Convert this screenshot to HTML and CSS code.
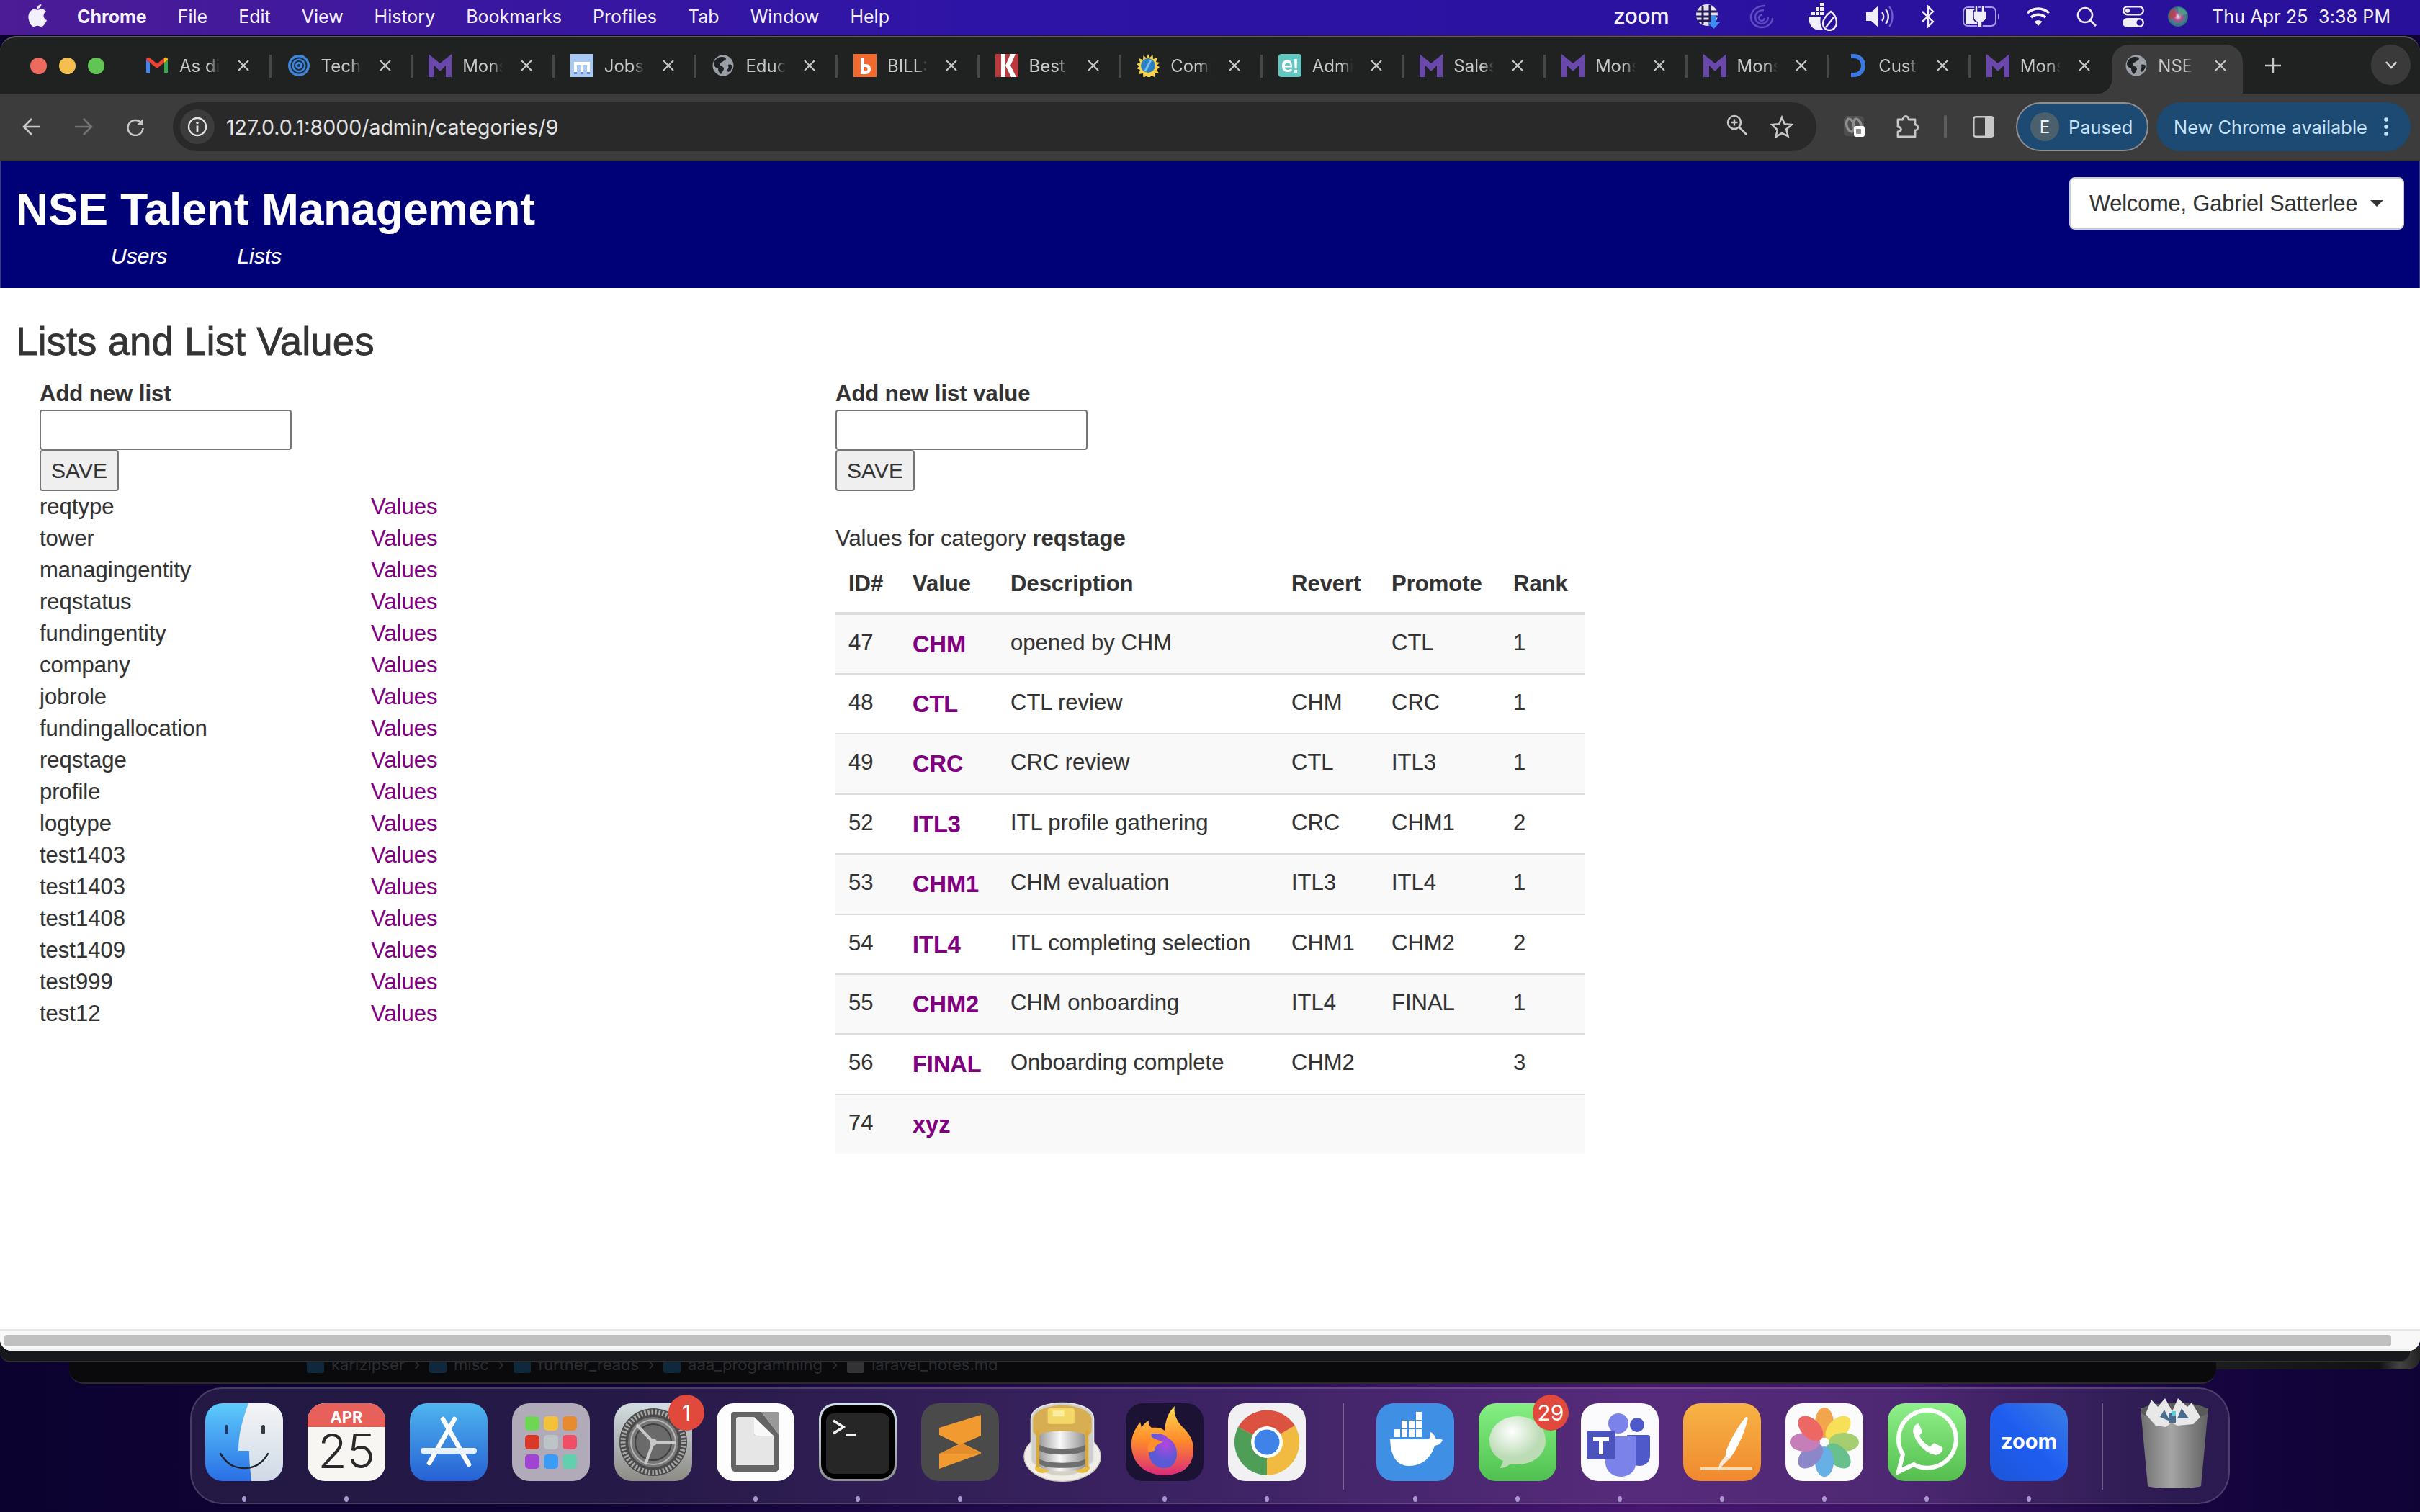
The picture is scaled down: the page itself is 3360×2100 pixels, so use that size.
FILE: index.html
```html
<!DOCTYPE html>
<html lang="en">
<head>
<meta charset="utf-8">
<title>NSE Talent Management</title>
<link rel="stylesheet" href="styles.css">
</head>
<body>
<svg class="sprite" aria-hidden="true">
  <symbol id="f-gmail" viewBox="0 0 32 32"><path d="M1 26V8l5 4v14z" fill="#4285f4"/><path d="M26 26V12l5-4v18z" fill="#34a853"/><path d="M1 8c0-3 3-4 5-2.500l10 8 10-8c2-1.500 5-.5 5 2.500l-5 4-10 8-10-8z" fill="#ea4335"/><path d="M26 5.500c2-1.500 5-.5 5 2.500l-5 4z" fill="#fbbc04"/></symbol>
  <symbol id="f-tech" viewBox="0 0 32 32"><circle cx="16" cy="16" r="15" fill="#3f86d8"/><circle cx="16" cy="16" r="10.500" fill="none" stroke="#1c2b42" stroke-width="2"/><circle cx="16" cy="16" r="6" fill="none" stroke="#1c2b42" stroke-width="2"/><circle cx="16" cy="16" r="2" fill="#1c2b42"/></symbol>
  <symbol id="f-mon" viewBox="0 0 32 32"><path d="M0 0l16 13L32 0v32h-8V16l-8 8-8-8v16H0z" fill="#6a48ab"/></symbol>
  <symbol id="f-jobs" viewBox="0 0 32 32"><rect width="32" height="32" fill="#a9c9f2"/><path d="M5 11h22v14h-4V15h-5v10h-4V15H9v10H5z" fill="#fff"/><path d="M5 25h4v3H5zm9 0h4v3h-4zm9 0h4v3h-4z" fill="#5b8ed6"/></symbol>
  <symbol id="f-globe" viewBox="0 0 32 32"><circle cx="16" cy="16" r="14.500" fill="#9aa0a6"/><path d="M9 5c5-2 10-1 11 1 0 3-3 3-5 5-3 1-5 3-3 6 3 0 5 1 5 4-1 3-3 5-4 7-3-2-4-5-4-8-3-1-6-3-6-7 1-4 3-6 6-8zM23 15c3-1 6 0 6 2-1 4-3 7-6 8-2-2-1-4 0-5 1-2 0-3 0-5z" fill="#202124"/></symbol>
  <symbol id="f-bills" viewBox="0 0 32 32"><rect width="32" height="32" fill="#f26a2e"/><path d="M10 5h5v9h2c5 0 7 3 7 7s-3 7-7 7h-7zm5 13v6h2c2 0 2.500-2 2.500-3s-.5-3-2.500-3z" fill="#fff"/></symbol>
  <symbol id="f-best" viewBox="0 0 32 32"><rect width="32" height="32" fill="#b83a3e"/><path d="M8 0h6v32H8zM28 0h-7l-7 16 8 16h7l-8-16z" fill="#fff"/></symbol>
  <symbol id="f-comp" viewBox="0 0 32 32"><path d="M16 0l2.500 5 4-4 .5 6 6-2-2 6 5 1-4 4 4 2-4 4 3 5-6 0 0 5-5-2-3 6-2.500-6-5 3-.5-6-6 1 2-6-5-2 4-3-4-3 5-2-2-6 6 2 .5-6 4.500 4z" fill="#f6d34a"/><circle cx="16" cy="16" r="10" fill="#2d7fc4"/><path d="M20 8l-8 16" stroke="#7cc2ee" stroke-width="3"/></symbol>
  <symbol id="f-adm" viewBox="0 0 32 32"><rect width="32" height="32" rx="4" fill="#63c6c0"/><path d="M13 8c-5 0-8 3.500-8 8.500s3 8.500 8 8.500c3 0 5-1 6-2l-1-3c-1 1-3 2-5 2-2.500 0-4-1.500-4.300-3.500H19c.5-5-2-10.500-6-10.500zm-4.200 8c.3-2 2-4 4.200-4s3.300 2 3.300 4z" fill="#fff"/><path d="M22 7h4l-.5 13h-3zM22 22h4v4h-4z" fill="#fff"/></symbol>
  <symbol id="f-cust" viewBox="0 0 32 32"><path d="M9 3h4c8 0 13 6 13 13s-5 13-13 13H9" fill="none" stroke="#3b78e0" stroke-width="6"/></symbol>
  <symbol id="close" viewBox="0 0 18 18"><path d="M2 2l14 14M16 2L2 16" stroke="#c7c7c7" stroke-width="2.200" fill="none"/></symbol>
</svg>

<div class="desktop">
  <header class="menubar">
    <svg class="apple" viewBox="0 0 26 32"><path d="M18.500 0c.2 3-2.500 6.500-6 6.300C12.200 3.300 15.200.3 18.500 0zM13 8c1.800 0 3.500-1.300 6-1.300 2.500 0 5 1.300 6.400 3.500-5.300 3-4.400 10.500 1 12.500-1.500 4-4.800 9.300-7.900 9.300-2.200 0-3-1.300-5.500-1.300s-3.400 1.300-5.500 1.300C4.200 32 0 24.500 0 18.300 0 12 4 7.200 8.500 7c1.700 0 3.300 1 4.500 1z" fill="#f4f0fb"/></svg>
    <nav class="menus">
      <span class="menu-app">Chrome</span><span>File</span><span>Edit</span><span>View</span><span>History</span><span>Bookmarks</span><span>Profiles</span><span>Tab</span><span>Window</span><span>Help</span>
    </nav>
    <div class="tray">
      <span class="tray-zoom">zoom</span>
      <svg class="t1" viewBox="0 0 34 36"><circle cx="16" cy="16" r="15" fill="#e4e2ee"/><path d="M2 11h28M1 18h30M3 24h24M10 3v26M20 2v28" stroke="#241a55" stroke-width="3"/><path d="M22 17h7v9h5l-8.500 9L17 26h5z" fill="#3d8ef0"/></svg>
      <svg class="t2" viewBox="0 0 34 34" fill="none" stroke="#5d4bc0" stroke-width="2.500"><path d="M22 2C10 2 2 9 2 18c0 8 7 14 15 14s15-6 15-13"/><path d="M20 8C13 8 8 12 8 18c0 5 4 9 9 9s9-4 9-9"/><path d="M18 15a4 4 0 1 0 3 4"/></svg>
      <svg class="t3" viewBox="0 0 40 40"><path d="M16 1h5v5h-5zM10 7h5v5h-5zM16 7h5v5h-5zM4 13h5v5H4zM10 13h5v5h-5zM16 13h5v5h-5z" fill="#f1eefb"/><path d="M0 20h17c-1 7-1 12 3 18H12C5 38 0 30 0 20z" fill="#f1eefb"/><path d="M31 13c-6 5-11 10-11 17 0 5 4 9 9 9s10-4 10-11c0-6-3-11-8-15zm4 8L24 35" fill="none" stroke="#f1eefb" stroke-width="2.400"/></svg>
      <svg class="t4" viewBox="0 0 38 32"><path d="M0 10h7L17 1v30L7 22H0z" fill="#f1eefb"/><path d="M22 10c3 3 3 9 0 12M27 6c5 5 5 15 0 20" fill="none" stroke="#f1eefb" stroke-width="2.400"/><path d="M32 2c6 7 6 21 0 28" fill="none" stroke="#6e5fc8" stroke-width="2.400"/></svg>
      <svg class="t5" viewBox="0 0 18 32"><path d="M1 9l15 14-7 7V2l7 7L1 23" fill="none" stroke="#f1eefb" stroke-width="2.400"/></svg>
      <svg class="t6" viewBox="0 0 52 30"><rect x="1" y="2" width="45" height="26" rx="6" fill="none" stroke="#a79fe0" stroke-width="2"/><path d="M4 5h18v20H4z" fill="#f1eefb"/><path d="M49 11c2 1 2 7 0 8z" fill="#a79fe0"/><path d="M17 0h4v7h5V0h4v7h3v9c0 4-3 6-6 7v7h-6v-7c-3-1-6-3-6-7V7h2z" fill="#f1eefb" stroke="#241196" stroke-width="1.500"/></svg>
      <svg class="t7" viewBox="0 0 34 26"><path d="M2 8c9-8 21-8 30 0M7 14c6-5 14-5 20 0" fill="none" stroke="#f6f4fd" stroke-width="3.600"/><path d="M17 26l-5.500-6c3-2.500 8-2.500 11 0z" fill="#f6f4fd"/></svg>
      <svg class="t8" viewBox="0 0 28 28"><circle cx="12" cy="12" r="10" fill="none" stroke="#f1eefb" stroke-width="2.600"/><path d="M19 19l8 8" stroke="#f1eefb" stroke-width="3"/></svg>
      <svg class="t9" viewBox="0 0 30 30"><rect x="1.200" y="1.200" width="27.600" height="11" rx="5.500" fill="none" stroke="#f1eefb" stroke-width="2.400"/><circle cx="7" cy="6.700" r="3" fill="#f1eefb"/><rect y="17" width="30" height="13" rx="6.500" fill="#f1eefb"/><circle cx="23.500" cy="23.500" r="4" fill="#241196"/></svg>
      <svg class="t10" viewBox="0 0 30 30"><defs><radialGradient id="siri" cx=".5" cy=".5" r=".55"><stop offset="0" stop-color="#f4e4f4"/><stop offset=".35" stop-color="#b84a8c"/><stop offset=".7" stop-color="#3c7f8a"/><stop offset="1" stop-color="#2a5d78"/></radialGradient></defs><circle cx="15" cy="15" r="14" fill="url(#siri)"/><path d="M3 19a14 14 0 0 1 6-16l4 12z" fill="#c8383f" opacity=".7"/><path d="M15 2a14 14 0 0 1 13 9l-12 4z" fill="#4fae8c" opacity=".65"/></svg>
      <span class="tray-date">Thu Apr 25&nbsp; 3:38 PM</span>
    </div>
  </header>

  <div class="back-window">
    <div class="crumbs">
      <span class="crumb-icon"></span><span class="crumb">karlzipser</span><span class="crumb-sep">›</span>
      <span class="crumb-icon"></span><span class="crumb">misc</span><span class="crumb-sep">›</span>
      <span class="crumb-icon"></span><span class="crumb">further_reads</span><span class="crumb-sep">›</span>
      <span class="crumb-icon"></span><span class="crumb">aaa_programming</span><span class="crumb-sep">›</span>
      <span class="crumb-icon crumb-file"></span><span class="crumb">laravel_notes.md</span>
    </div>
  </div>
  <div class="back-strip"></div>

  <main class="window">
    <div class="tabstrip">
      <div class="lights"><i class="red"></i><i class="amber"></i><i class="green"></i></div>
      <div class="tabs">
        <div class="tab"><svg class="fav"><use href="#f-gmail"/></svg><span class="tab-label">As di</span><svg class="tab-x"><use href="#close"/></svg></div>
        <div class="tab"><svg class="fav"><use href="#f-tech"/></svg><span class="tab-label">Tech</span><svg class="tab-x"><use href="#close"/></svg></div>
        <div class="tab"><svg class="fav"><use href="#f-mon"/></svg><span class="tab-label">Mons</span><svg class="tab-x"><use href="#close"/></svg></div>
        <div class="tab"><svg class="fav"><use href="#f-jobs"/></svg><span class="tab-label">Jobs</span><svg class="tab-x"><use href="#close"/></svg></div>
        <div class="tab"><svg class="fav"><use href="#f-globe"/></svg><span class="tab-label">Educ</span><svg class="tab-x"><use href="#close"/></svg></div>
        <div class="tab"><svg class="fav"><use href="#f-bills"/></svg><span class="tab-label">BILL:</span><svg class="tab-x"><use href="#close"/></svg></div>
        <div class="tab"><svg class="fav"><use href="#f-best"/></svg><span class="tab-label">Best</span><svg class="tab-x"><use href="#close"/></svg></div>
        <div class="tab"><svg class="fav"><use href="#f-comp"/></svg><span class="tab-label">Comp</span><svg class="tab-x"><use href="#close"/></svg></div>
        <div class="tab"><svg class="fav"><use href="#f-adm"/></svg><span class="tab-label">Admi</span><svg class="tab-x"><use href="#close"/></svg></div>
        <div class="tab"><svg class="fav"><use href="#f-mon"/></svg><span class="tab-label">Sales</span><svg class="tab-x"><use href="#close"/></svg></div>
        <div class="tab"><svg class="fav"><use href="#f-mon"/></svg><span class="tab-label">Mons</span><svg class="tab-x"><use href="#close"/></svg></div>
        <div class="tab"><svg class="fav"><use href="#f-mon"/></svg><span class="tab-label">Mons</span><svg class="tab-x"><use href="#close"/></svg></div>
        <div class="tab"><svg class="fav"><use href="#f-cust"/></svg><span class="tab-label">Cust</span><svg class="tab-x"><use href="#close"/></svg></div>
        <div class="tab tab-last"><svg class="fav"><use href="#f-mon"/></svg><span class="tab-label">Mons</span><svg class="tab-x"><use href="#close"/></svg></div>
        <div class="tab tab-active"><svg class="fav"><use href="#f-globe"/></svg><span class="tab-label">NSE</span><svg class="tab-x"><use href="#close"/></svg></div>
      </div>
      <svg class="tab-plus" viewBox="0 0 24 24"><path d="M12 1v22M1 12h22" stroke="#c7c7c7" stroke-width="2.400"/></svg>
      <div class="tab-search"><svg viewBox="0 0 18 12"><path d="M2 2l7 8 7-8" fill="none" stroke="#d8d8d8" stroke-width="2.400"/></svg></div>
    </div>

    <div class="toolbar">
      <div class="tool-btn"><svg viewBox="0 0 26 26"><path d="M25 13H3M13 2L2 13l11 11" fill="none" stroke="#c7c7c7" stroke-width="2.600"/></svg></div>
      <div class="tool-btn"><svg viewBox="0 0 26 26"><path d="M1 13h22M13 2l11 11-11 11" fill="none" stroke="#737373" stroke-width="2.600"/></svg></div>
      <div class="tool-btn"><svg viewBox="0 0 26 26"><path d="M22 9a10.500 10.500 0 1 0 1.500 6" fill="none" stroke="#c7c7c7" stroke-width="2.600"/><path d="M23.500 2v9h-9z" fill="#c7c7c7"/></svg></div>
      <div class="omnibox">
        <div class="site-info"><svg viewBox="0 0 28 28"><circle cx="14" cy="14" r="12" fill="none" stroke="#e3e3e3" stroke-width="2.400"/><path d="M14 12.500V21" stroke="#e3e3e3" stroke-width="2.800"/><circle cx="14" cy="8.500" r="1.800" fill="#e3e3e3"/></svg></div>
        <span class="url">127.0.0.1:8000/admin/categories/9</span>
        <svg class="omni-zoom" viewBox="0 0 30 34"><circle cx="11" cy="11" r="9" fill="none" stroke="#c7c7c7" stroke-width="2.600"/><path d="M11 6.500v9M6.500 11h9" stroke="#c7c7c7" stroke-width="2.400"/><path d="M18 18l10 10" stroke="#c7c7c7" stroke-width="2.800"/></svg>
        <svg class="omni-star" viewBox="0 0 32 32"><path d="M16 3l3.800 9.200 9.900.8-7.500 6.500 2.300 9.700L16 25l-8.500 5.200 2.300-9.700L2.300 13l9.900-.8z" fill="none" stroke="#c7c7c7" stroke-width="2.600"/></svg>
      </div>
      <svg class="ext-one" viewBox="0 0 30 30"><rect width="28" height="28" rx="5" fill="#4e4e4e"/><ellipse cx="9" cy="13" rx="5" ry="9" fill="none" stroke="#8f8f8f" stroke-width="3.500" transform="rotate(-15 9 13)"/><ellipse cx="19" cy="13" rx="5" ry="9" fill="none" stroke="#8f8f8f" stroke-width="3.500" transform="rotate(-15 19 13)"/><rect x="14" y="14" width="15" height="15" rx="3" fill="#fff"/><rect x="17" y="18" width="7" height="7" rx="1" fill="#8f8f8f"/></svg>
      <svg class="ext-two" viewBox="0 0 34 34"><path d="M4 7h7c0-6 8-6 8 0h9v7c5 0 5 8 0 8v9H4v-7c4 0 6-3 3-6-1-1-3-1-3-1z" fill="none" stroke="#c7c7c7" stroke-width="2.800" stroke-linejoin="round"/></svg>
      <div class="tool-sep"></div>
      <svg class="side-panel" viewBox="0 0 30 30"><rect x="1.300" y="1.300" width="27.400" height="27.400" rx="3" fill="none" stroke="#c7c7c7" stroke-width="2.600"/><path d="M17 1h10a2 2 0 0 1 2 2v24a2 2 0 0 1-2 2H17z" fill="#c7c7c7"/></svg>
      <div class="pill pill-paused"><span class="avatar">E</span><span>Paused</span></div>
      <div class="pill pill-update"><span>New Chrome available</span><svg viewBox="0 0 8 28"><circle cx="4" cy="4" r="2.800" fill="#c6e3fb"/><circle cx="4" cy="14" r="2.800" fill="#c6e3fb"/><circle cx="4" cy="24" r="2.800" fill="#c6e3fb"/></svg></div>
    </div>

    <div class="page">
      <div class="site-header">
        <div>
          <h1 class="brand">NSE Talent Management</h1>
          <nav class="site-nav"><a>Users</a><a>Lists</a></nav>
        </div>
        <button class="welcome">Welcome, Gabriel Satterlee<i class="caret"></i></button>
      </div>
      <div class="content">
        <h2 class="heading">Lists and List Values</h2>
        <div class="columns">
          <section class="col">
            <label class="field-label">Add new list</label>
            <input class="field" type="text">
            <button class="save">SAVE</button>
            <ul class="lists">
              <li><span>reqtype</span><a>Values</a></li>
              <li><span>tower</span><a>Values</a></li>
              <li><span>managingentity</span><a>Values</a></li>
              <li><span>reqstatus</span><a>Values</a></li>
              <li><span>fundingentity</span><a>Values</a></li>
              <li><span>company</span><a>Values</a></li>
              <li><span>jobrole</span><a>Values</a></li>
              <li><span>fundingallocation</span><a>Values</a></li>
              <li><span>reqstage</span><a>Values</a></li>
              <li><span>profile</span><a>Values</a></li>
              <li><span>logtype</span><a>Values</a></li>
              <li><span>test1403</span><a>Values</a></li>
              <li><span>test1403</span><a>Values</a></li>
              <li><span>test1408</span><a>Values</a></li>
              <li><span>test1409</span><a>Values</a></li>
              <li><span>test999</span><a>Values</a></li>
              <li><span>test12</span><a>Values</a></li>
            </ul>
          </section>
          <section class="col">
            <label class="field-label">Add new list value</label>
            <input class="field" type="text">
            <button class="save">SAVE</button>
            <p class="category-note">Values for category <b>reqstage</b></p>
            <table class="values">
              <colgroup><col class="c-id"><col class="c-val"><col class="c-desc"><col class="c-rev"><col class="c-pro"><col class="c-rank"></colgroup>
              <thead><tr><th>ID#</th><th>Value</th><th>Description</th><th>Revert</th><th>Promote</th><th>Rank</th></tr></thead>
              <tbody>
                <tr><td>47</td><td class="val"><a>CHM</a></td><td>opened by CHM</td><td></td><td>CTL</td><td>1</td></tr>
                <tr><td>48</td><td class="val"><a>CTL</a></td><td>CTL review</td><td>CHM</td><td>CRC</td><td>1</td></tr>
                <tr><td>49</td><td class="val"><a>CRC</a></td><td>CRC review</td><td>CTL</td><td>ITL3</td><td>1</td></tr>
                <tr><td>52</td><td class="val"><a>ITL3</a></td><td>ITL profile gathering</td><td>CRC</td><td>CHM1</td><td>2</td></tr>
                <tr><td>53</td><td class="val"><a>CHM1</a></td><td>CHM evaluation</td><td>ITL3</td><td>ITL4</td><td>1</td></tr>
                <tr><td>54</td><td class="val"><a>ITL4</a></td><td>ITL completing selection</td><td>CHM1</td><td>CHM2</td><td>2</td></tr>
                <tr><td>55</td><td class="val"><a>CHM2</a></td><td>CHM onboarding</td><td>ITL4</td><td>FINAL</td><td>1</td></tr>
                <tr><td>56</td><td class="val"><a>FINAL</a></td><td>Onboarding complete</td><td>CHM2</td><td></td><td>3</td></tr>
                <tr><td>74</td><td class="val"><a>xyz</a></td><td></td><td></td><td></td><td></td></tr>
              </tbody>
            </table>
          </section>
        </div>
      </div>
      <div class="hscroll"><div class="hthumb"></div></div>
    </div>
  </main>

  <footer class="dock">
    <div class="app dot"><svg viewBox="0 0 108 108"><defs><linearGradient id="fb" x1="0" y1="0" x2="0" y2="1"><stop offset="0" stop-color="#5ecbfb"/><stop offset="1" stop-color="#2a6fe6"/></linearGradient><linearGradient id="fw" x1="0" y1="0" x2="0" y2="1"><stop offset="0" stop-color="#f4f4f6"/><stop offset="1" stop-color="#cfdae6"/></linearGradient></defs><rect width="108" height="108" rx="24" fill="url(#fb)"/><path d="M60 0h24a24 24 0 0 1 24 24v60a24 24 0 0 1-24 24H64c-1-12-3-24-3-42H46c0-24 6-44 14-66z" fill="url(#fw)"/><rect x="27" y="30" width="5" height="13" rx="2.500" fill="#1b3a6b"/><rect x="78" y="30" width="5" height="13" rx="2.500" fill="#333a44"/><path d="M21 70c10 16 20 20 34 20s24-6 32-20" fill="none" stroke="#1c2430" stroke-width="2.500" stroke-linecap="round"/></svg></div>
    <div class="app dot"><svg viewBox="0 0 108 108"><rect width="108" height="108" rx="24" fill="#f8f6f3"/><path d="M0 33V24A24 24 0 0 1 24 0h60a24 24 0 0 1 24 24v9z" fill="#e8605a"/><text x="54" y="27" class="cal-month">APR</text><text x="54" y="90" class="cal-day">25</text></svg></div>
    <div class="app"><svg viewBox="0 0 108 108"><defs><linearGradient id="as" x1="0" y1="0" x2="0" y2="1"><stop offset="0" stop-color="#4eb5ef"/><stop offset="1" stop-color="#2660d4"/></linearGradient></defs><rect width="108" height="108" rx="24" fill="url(#as)"/><path d="M46 22l36 63M62 22L27 83" stroke="#fff" stroke-width="6.500" stroke-linecap="round"/><path d="M19 66h70" stroke="#eaf3fb" stroke-width="8" stroke-linecap="round"/></svg></div>
    <div class="app"><svg viewBox="0 0 108 108"><rect width="108" height="108" rx="24" fill="#b1abb9"/><rect x="18" y="18" width="20" height="20" rx="5" fill="#6fd655"/><rect x="44" y="18" width="20" height="20" rx="5" fill="#f4c23a"/><rect x="70" y="18" width="20" height="20" rx="5" fill="#e88a2f"/><rect x="18" y="44" width="20" height="20" rx="5" fill="#d83a27"/><rect x="44" y="44" width="20" height="20" rx="5" fill="#bcc4c8"/><rect x="70" y="44" width="20" height="20" rx="5" fill="#ee4f66"/><rect x="18" y="71" width="20" height="20" rx="5" fill="#a044d4"/><rect x="44" y="71" width="20" height="20" rx="5" fill="#3a9cf6"/><rect x="70" y="71" width="20" height="20" rx="5" fill="#62cfae"/></svg></div>
    <div class="app"><svg viewBox="0 0 108 108"><defs><linearGradient id="st" x1="0" y1="0" x2="0" y2="1"><stop offset="0" stop-color="#d3dde2"/><stop offset="1" stop-color="#8d8b85"/></linearGradient></defs><rect width="108" height="108" rx="24" fill="url(#st)"/><circle cx="54" cy="54" r="47" fill="#4a4a4a"/><circle cx="54" cy="54" r="42" fill="none" stroke="#a8a8a8" stroke-width="7" stroke-dasharray="2.500 2.500"/><circle cx="54" cy="54" r="35" fill="#777"/><circle cx="54" cy="54" r="31" fill="none" stroke="#b5b5b5" stroke-width="2"/><circle cx="54" cy="54" r="25" fill="#6a6a6a" stroke="#3f3f3f" stroke-width="2"/><path d="M54 54h31M54 54L43 85M54 54L31 30" stroke="#c8c8c8" stroke-width="4"/><circle cx="54" cy="54" r="5" fill="#c8c8c8"/></svg><span class="badge">1</span></div>
    <div class="app dot"><svg viewBox="0 0 108 108"><rect width="108" height="108" rx="24" fill="#fdfdfd"/><path d="M24 12H62L87 44V88a8 8 0 0 1-8 8H28a8 8 0 0 1-8-8V16a4 4 0 0 1 4-4z" fill="#646464"/><path d="M62 12H84a3 3 0 0 1 3 3V44z" fill="#999"/><path d="M29 19H52V42a3 3 0 0 0 3 3H79V86H27V21z" fill="#e6e6e6"/><path d="M52 19L79 45H55a3 3 0 0 1-3-3z" fill="#f8f8f8"/></svg></div>
    <div class="app dot"><svg viewBox="0 0 108 108"><defs><linearGradient id="tm" x1="0" y1="0" x2="0" y2="1"><stop offset="0" stop-color="#cfe3ea"/><stop offset="1" stop-color="#8f8f8f"/></linearGradient></defs><rect width="108" height="108" rx="22" fill="url(#tm)"/><rect x="3" y="3" width="102" height="102" rx="20" fill="#000"/><rect x="10" y="14" width="88" height="84" rx="10" fill="#262626"/><path d="M20 24l14 9-14 9" fill="none" stroke="#f2f2f2" stroke-width="3.500"/><path d="M37 44h14" stroke="#f2f2f2" stroke-width="3.500"/></svg></div>
    <div class="app dot"><svg viewBox="0 0 108 108"><rect width="108" height="108" rx="24" fill="#4a4a4a"/><path d="M83 16v29L58 56 83 68v2L25 91V70l27-13-27-13V34z" fill="#f09a30"/><path d="M25 70l33-14 25 14z" fill="#e48d2a"/></svg></div>
    <div class="app"><svg class="tall" viewBox="0 0 122 125"><defs><linearGradient id="sq" x1="0" y1="0" x2="1" y2="0"><stop offset="0" stop-color="#9a9a9a"/><stop offset=".45" stop-color="#f8f8f8"/><stop offset="1" stop-color="#8e8e8e"/></linearGradient></defs><ellipse cx="61" cy="85" rx="60" ry="39" fill="#efede6" stroke="#c9c6bb" stroke-width="1.500"/><ellipse cx="61" cy="85" rx="49" ry="30" fill="#d5d1c6"/><ellipse cx="30" cy="103" rx="12" ry="8" fill="#e9bd3f"/><ellipse cx="92" cy="103" rx="12" ry="8" fill="#e9bd3f"/><path d="M12 26C12 10 34 1 61 1s49 9 49 25v64c0 10-22 16-49 16S12 100 12 90z" fill="#cfcfcd" stroke="#e6e6e6" stroke-width="2"/><path d="M15 28C15 14 36 5 61 5s46 9 46 23v16c0 10-20 16-46 16S15 54 15 44z" fill="#d8ae52"/><path d="M24 54c0-5 16-9 37-9s37 4 37 9v44c0 6-16 10-37 10S24 104 24 98z" fill="url(#sq)"/><path d="M24 66c6 5 20 7 37 7s31-2 37-7v9c-6 5-20 7-37 7s-31-2-37-7zM24 88c6 5 20 7 37 7s31-2 37-7v8c-6 5-20 7-37 7s-31-2-37-7z" fill="#6e6e6e"/><path d="M20 44h5v58h-5zM97 44h5v58h-5z" fill="#d9a938"/><path d="M42 9h34c3 0 4 2 4 4v17c0 2-1 4-4 4H42c-3 0-4-2-4-4V13c0-2 1-4 4-4z" fill="#f3d767"/><path d="M46 13h18v9H46z" fill="#fbeea2"/></svg></div>
    <div class="app dot"><svg viewBox="0 0 108 108"><defs><linearGradient id="ffo" x1="0" y1="0" x2="0" y2="1"><stop offset="0" stop-color="#ffdb4d"/><stop offset=".5" stop-color="#ff8a2b"/><stop offset="1" stop-color="#d92a7a"/></linearGradient><radialGradient id="ffp" cx=".6" cy=".3"><stop offset="0" stop-color="#b545e0"/><stop offset="1" stop-color="#5b5ad6"/></radialGradient></defs><rect width="108" height="108" rx="24" fill="#1c1233"/><path d="M54 100C24 100 7 80 8 56c0-12 6-22 12-30l2 8c2-4 6-8 10-10-1 4 1 8 4 10 8-1 14 0 18 4 1-14 5-26 14-34-2 12 4 22 12 30 8 9 14 16 14 30 0 26-18 36-42 36z" fill="url(#ffo)"/><path d="M54 90c-14 0-22-10-22-22 0-10 8-12 10-18-4-2-8-3-6-8 8 0 18 0 22 6 8 4 13 12 13 22 0 12-7 20-17 20z" fill="url(#ffp)"/><path d="M32 68c-4-8 0-16 10-18l10 4c-6 2-12 4-12 12-2 0-6 2-8 2z" fill="#ff8f2a"/></svg></div>
    <div class="app dot"><svg viewBox="0 0 108 108"><rect width="108" height="108" rx="24" fill="#f1f1f4"/><path d="M54 54L14 33A46 46 0 0 1 93 31z" fill="#db5240"/><path d="M54 54L14 33a46 46 0 0 0 40 67z" fill="#4f9e58"/><path d="M54 54l39-23a46 46 0 0 1-39 69z" fill="#f0bb40"/><circle cx="54" cy="54" r="22" fill="#fff"/><circle cx="54" cy="54" r="17.500" fill="#3f82e8"/></svg></div>
    <div class="dock-sep dock-sep-a"></div>
    <div class="app dot"><svg viewBox="0 0 108 108"><rect width="108" height="108" rx="24" fill="#3f8fe5"/><path d="M19 50h53c3-1 3-7 3-10 2 0 6 4 8 10 4-1 8 0 9 1-3 7-8 7-11 8-6 18-18 28-36 28-16 0-25-12-26-37z" fill="#fff"/><g fill="#fff"><rect x="25" y="36" width="8" height="11"/><rect x="35" y="36" width="8" height="11"/><rect x="45" y="36" width="8" height="11"/><rect x="55" y="36" width="8" height="11"/><rect x="35" y="24" width="8" height="11"/><rect x="45" y="24" width="8" height="11"/><rect x="55" y="24" width="8" height="11"/><rect x="55" y="12" width="8" height="11"/></g></svg></div>
    <div class="app dot"><svg viewBox="0 0 108 108"><defs><linearGradient id="mg" x1="0" y1="0" x2="0" y2="1"><stop offset="0" stop-color="#85ef84"/><stop offset="1" stop-color="#4fc14f"/></linearGradient><radialGradient id="mb" cx=".4" cy=".3"><stop offset="0" stop-color="#fff"/><stop offset="1" stop-color="#bcdcb6"/></radialGradient></defs><rect width="108" height="108" rx="24" fill="url(#mg)"/><path d="M54 18c-21 0-39 14-39 34 0 13 8 23 19 28-1 4-3 8-5 10 7 0 12-3 15-6 3 1 7 1 10 1 22 0 39-14 39-33S76 18 54 18z" fill="url(#mb)"/></svg><span class="badge">29</span></div>
    <div class="app dot"><svg viewBox="0 0 108 108"><rect width="108" height="108" rx="24" fill="#fbfbfd"/><circle cx="52" cy="28" r="14" fill="#7b83eb"/><circle cx="78" cy="30" r="10" fill="#5059c9"/><path d="M64 44h29c2 0 3 1 3 3v26c0 9-7 14-15 14-3 0-6-1-8-2z" fill="#5059c9"/><path d="M34 46h42v38c0 11-10 18-21 18-12 0-21-9-21-20z" fill="#7b83eb"/><rect x="8" y="38" width="40" height="40" rx="4" fill="#4b53bc"/><path d="M17 47h22v5h-8v19h-6V52h-8z" fill="#fff"/></svg></div>
    <div class="app dot"><svg viewBox="0 0 108 108"><defs><linearGradient id="pg" x1="0" y1="0" x2="0" y2="1"><stop offset="0" stop-color="#f7b345"/><stop offset="1" stop-color="#f0892f"/></linearGradient></defs><rect width="108" height="108" rx="24" fill="url(#pg)"/><rect x="24" y="89" width="72" height="4" fill="#fbd9ae"/><path d="M86 20c2-2 4-1 3.500 2-3 14-10 32-20 48l-5 7-6-3 1-8C65 52 76 32 86 20z" fill="#fff"/><path d="M58 74l6 3-8 8-8 9 3-11z" fill="#f5e9da"/></svg></div>
    <div class="app dot"><svg viewBox="0 0 108 108"><rect width="108" height="108" rx="24" fill="#fbfbfb"/><g class="petals"><ellipse cx="54" cy="27" rx="13" ry="21" fill="#f28e1c" transform="rotate(0 54 54)"/><ellipse cx="54" cy="27" rx="13" ry="21" fill="#f6d92b" transform="rotate(45 54 54)"/><ellipse cx="54" cy="27" rx="13" ry="21" fill="#8ec24a" transform="rotate(90 54 54)"/><ellipse cx="54" cy="27" rx="13" ry="21" fill="#3fb06f" transform="rotate(135 54 54)"/><ellipse cx="54" cy="27" rx="13" ry="21" fill="#3d9be0" transform="rotate(180 54 54)"/><ellipse cx="54" cy="27" rx="13" ry="21" fill="#6c67bb" transform="rotate(225 54 54)"/><ellipse cx="54" cy="27" rx="13" ry="21" fill="#b65ca6" transform="rotate(270 54 54)"/><ellipse cx="54" cy="27" rx="13" ry="21" fill="#ea3f3a" transform="rotate(315 54 54)"/></g></svg></div>
    <div class="app dot"><svg viewBox="0 0 108 108"><defs><linearGradient id="wa" x1="0" y1="0" x2="0" y2="1"><stop offset="0" stop-color="#8ff08a"/><stop offset="1" stop-color="#54be4e"/></linearGradient></defs><rect width="108" height="108" rx="24" fill="url(#wa)"/><path d="M15 95l6-24a40 40 0 1 1 15 14z" fill="none" stroke="#fff" stroke-width="6"/><path d="M40 29c-4 3-6 8-4 14 4 12 14 24 27 28 6 2 11-1 13-6 1-3 0-4-2-5l-8-4c-2-1-3 0-4 1l-3 3c-7-3-12-9-15-15l3-4c1-1 1-2 0-4l-3-7c-1-2-2-2-4-1z" fill="#fff"/></svg></div>
    <div class="app dot"><svg viewBox="0 0 108 108"><defs><linearGradient id="zm" x1="1" y1="0" x2="0" y2="1"><stop offset="0" stop-color="#3a7fe6"/><stop offset=".5" stop-color="#1e5df0"/><stop offset="1" stop-color="#1d55d8"/></linearGradient></defs><rect width="108" height="108" rx="24" fill="url(#zm)"/><text x="54" y="63" class="zoom-word">zoom</text></svg></div>
    <div class="dock-sep dock-sep-b"></div>
    <div class="app"><svg class="tall" viewBox="0 0 108 126"><defs><linearGradient id="tr" x1="0" y1="0" x2="1" y2="0"><stop offset="0" stop-color="#6f6f6f"/><stop offset=".45" stop-color="#a5a5a5"/><stop offset="1" stop-color="#626262"/></linearGradient></defs><path d="M7 16l10 108c6 4 66 4 74 0l10-108z" fill="url(#tr)"/><ellipse cx="54" cy="20" rx="47" ry="12" fill="#5a5a5a"/><path d="M14 24l8-20 9 10 10-12 10 18 8-18 13 12 6-6 12 20-10 10-22 2-8-4-8 6-14-2z" fill="#e8e8e8"/><path d="M34 28l6-10 8 16zM58 30l6-14 10 14zM46 22h10v14H46z" fill="#4a6c8f"/><path d="M50 20h6v6h-6z" fill="#5cd0d8"/></svg></div>
  </footer>
</div>
</body>
</html>
```
FILE: styles.css
```css
* { box-sizing: border-box; }
html, body { margin: 0; padding: 0; }
body { width: 3360px; height: 2100px; overflow: hidden; font-family: "Liberation Sans", Arial, sans-serif; }
.sprite { display: none; }

.desktop {
  position: relative;
  width: 3360px;
  height: 2100px;
  overflow: hidden;
  background: linear-gradient(90deg, #0c0230 0, #100335 25%, #2a0e55 50%, #47166f 68%, #3d1366 78%, #170540 90%, #0f0235 100%);
}

/* macOS menu bar */
.menubar {
  display: flex;
  align-items: center;
  height: 48px;
  padding: 0 0 2px 39px;
  background: linear-gradient(90deg, #4c1c96 0, #3a17a0 20%, #2e14a6 40%, #28109a 100%);
  color: #f4f1fb;
  font-family: Inter, "Liberation Sans", sans-serif;
  font-size: 25px;
}
.apple { width: 26px; height: 31px; margin-top: -4px; }
.menus { display: flex; gap: 43px; margin-left: 42px; }
.menu-app { font-weight: 700; }
.tray { display: flex; align-items: center; margin-left: auto; padding-right: 38px; }
.tray-zoom { font-size: 30px; font-weight: 500; width: 80px; letter-spacing: -.5px; margin-top: -2px; }
.t1 { width: 34px; height: 36px; margin-left: 34px; }
.t2 { width: 34px; height: 34px; margin-left: 41px; }
.t3 { width: 40px; height: 40px; margin-left: 48px; }
.t4 { width: 38px; height: 32px; margin-left: 40px; }
.t5 { width: 18px; height: 32px; margin-left: 39px; }
.t6 { width: 52px; height: 30px; margin-left: 39px; }
.t7 { width: 34px; height: 26px; margin-left: 36px; }
.t8 { width: 28px; height: 28px; margin-left: 36px; }
.t9 { width: 30px; height: 30px; margin-left: 36px; }
.t10 { width: 30px; height: 30px; margin-left: 32px; }
.tray-date { margin-left: 32px; width: 251px; white-space: nowrap; letter-spacing: .15px; }

/* windows behind the browser */
.back-window {
  position: absolute;
  left: 96px;
  top: 1870px;
  width: 2981px;
  height: 52px;
  background: #0a0a0c;
  border-bottom: 2px solid #2a2a2c;
  border-radius: 0 0 20px 20px;
  overflow: hidden;
}
.crumbs {
  display: flex;
  align-items: center;
  height: 50px;
  padding-left: 330px;
  color: #2c2d31;
  font-family: Inter, "Liberation Sans", sans-serif;
  font-size: 22px;
  white-space: nowrap;
}
.crumb-icon { width: 24px; height: 24px; margin-right: 10px; background: #10283c; border-radius: 3px; flex: none; }
.crumb-file { background: #333335; }
.crumb-sep { width: 34px; text-align: center; flex: none; }
.back-strip {
  position: absolute;
  left: 3077px;
  top: 1870px;
  width: 283px;
  height: 32px;
  background: linear-gradient(90deg, #1b1c1d, #111 80%, #444 90%, #222);
  border-radius: 0 0 16px 0;
}
/* dark edge of the window stack under the browser */
.desktop::after {
  content: "";
  position: absolute;
  left: 0;
  top: 1862px;
  width: 3346px;
  height: 28px;
  background: #16181b;
  border-bottom: 2px solid #2c2d30;
  border-radius: 0 0 14px 14px;
}

/* browser window */
.window {
  position: absolute;
  z-index: 1;
  left: 0;
  top: 50px;
  width: 3360px;
  height: 1826px;
  display: flex;
  flex-direction: column;
  background: #202221;
  border-top: 2px solid #5c5c5c;
  border-radius: 22px 22px 16px 16px;
  overflow: hidden;
}
.tabstrip { display: flex; align-items: flex-start; height: 78px; padding-left: 42px; flex: none; }
.lights { display: flex; gap: 17px; width: 103px; height: 78px; align-items: center; margin-right: 35px; }
.lights i { display: block; width: 23px; height: 23px; border-radius: 50%; }
.red { background: #ee6a5f; }
.amber { background: #f5bf4f; }
.green { background: #61c554; }
.tabs { display: flex; }
.tab {
  position: relative;
  display: flex;
  align-items: center;
  width: 196.6px;
  height: 78px;
  padding-left: 22px;
  flex: none;
  font-family: Inter, "Liberation Sans", sans-serif;
  font-size: 24px;
  color: #c7c7c7;
}
.tab::after {
  content: "";
  position: absolute;
  right: 0;
  top: 24px;
  width: 3px;
  height: 32px;
  background: #474747;
}
.tab-last::after, .tab-active::after { display: none; }
.fav { width: 32px; height: 32px; flex: none; }
.tab-label {
  width: 56px;
  margin-left: 15px;
  overflow: hidden;
  white-space: nowrap;
  -webkit-mask-image: linear-gradient(90deg, #000 72%, transparent 100%);
  mask-image: linear-gradient(90deg, #000 72%, transparent 100%);
}
.tab-x { width: 18px; height: 18px; margin-left: 24px; flex: none; }
.tab-active {
  width: 182px;
  height: 68px;
  margin-top: 10px;
  padding: 0 0 10px 18px;
  background: #3c3c3c;
  border-radius: 24px 24px 0 0;
}
.tab-active .tab-label { width: 50px; margin-left: 14px; }
.tab-active .tab-x { margin-left: 28px; }
.tab-active::before {
  content: "";
  position: absolute;
  left: -20px;
  bottom: 0;
  width: 20px;
  height: 20px;
  background: radial-gradient(circle at 0 0, transparent 20px, #3c3c3c 20.5px);
}
.tab-plus { width: 24px; height: 24px; margin: 27px 0 0 30px; flex: none; }
.tab-search {
  display: flex;
  align-items: center;
  justify-content: center;
  width: 55px;
  height: 56px;
  margin: 10px 13px 0 auto;
  border-radius: 28px;
  background: #3a3a3a;
}
.tab-search svg { width: 18px; height: 12px; }

.toolbar { display: flex; align-items: center; height: 94px; padding: 0 13px 0 8px; flex: none; background: #3c3c3c; border-bottom: 2px solid #333; }
.tool-btn { display: flex; align-items: center; justify-content: center; width: 72px; height: 68px; flex: none; }
.tool-btn svg { width: 26px; height: 26px; }
.omnibox {
  display: flex;
  align-items: center;
  flex: 1;
  height: 68px;
  margin-left: 16px;
  padding: 0 32px 0 10px;
  border-radius: 34px;
  background: #292929;
  font-family: Inter, "Liberation Sans", sans-serif;
  font-size: 28.5px;
  color: #e3e3e3;
}
.site-info { display: flex; align-items: center; justify-content: center; width: 48px; height: 48px; border-radius: 50%; background: #3c3c3c; flex: none; }
.site-info svg { width: 28px; height: 28px; }
.url { margin-left: 16px; white-space: nowrap; }
.omni-zoom { width: 30px; height: 34px; margin-left: auto; flex: none; }
.omni-star { width: 32px; height: 32px; margin-left: 31px; flex: none; }
.ext-one { width: 30px; height: 30px; margin-left: 38px; flex: none; }
.ext-two { width: 34px; height: 34px; margin-left: 41px; flex: none; }
.tool-sep { width: 4px; height: 32px; margin-left: 34px; background: #5f5f5f; border-radius: 2px; flex: none; }
.side-panel { width: 30px; height: 30px; margin-left: 36px; flex: none; }
.pill {
  display: flex;
  align-items: center;
  height: 68px;
  border-radius: 34px;
  background: #1c4a72;
  color: #c6e3fb;
  font-family: Inter, "Liberation Sans", sans-serif;
  font-size: 25.4px;
  flex: none;
}
.pill-paused { width: 184px; margin-left: 30px; padding-left: 18px; border: 2px solid #8f8f8f; }
.avatar {
  display: flex;
  align-items: center;
  justify-content: center;
  width: 40px;
  height: 40px;
  margin-right: 13px;
  border-radius: 50%;
  background: #4b5f6d;
  color: #f2f2f2;
  font-size: 24px;
}
.pill-update { width: 353px; margin-left: 11px; padding-left: 24px; }
.pill-update svg { width: 8px; height: 28px; margin-left: 22px; }

/* web page */
.page {
  display: flex;
  flex-direction: column;
  flex: 1;
  min-height: 0;
  background: #fff;
  color: #333;
  font-size: 31px;
  line-height: 42px;
  -webkit-text-stroke: .15px;
}
.site-header {
  display: flex;
  justify-content: space-between;
  align-items: flex-start;
  height: 176px;
  padding: 0 20px;
  background: #000077;
  border-left: 2px solid #3a3a90;
  border-right: 2px solid #3a3a90;
  flex: none;
}
.brand { margin: 32px 0 0; font-size: 62.2px; line-height: 70px; font-weight: 700; color: #fff; }
.site-nav { display: flex; gap: 97px; margin: 10px 0 0 132px; font-size: 30px; line-height: 40px; font-style: italic; color: #fff; }
.welcome {
  display: flex;
  align-items: center;
  width: 465px;
  height: 73px;
  margin-top: 22px;
  padding: 0 0 0 26px;
  background: #fff;
  border: 2px solid #ccc;
  border-radius: 8px;
  font: 30.5px "Liberation Sans", Arial, sans-serif;
  color: #333;
}
.caret { width: 0; height: 0; margin-left: 18px; border: 9px solid transparent; border-top-color: #333; border-bottom: 0; }

.content { flex: 1; padding: 0 22px; min-height: 0; }
.heading { margin: 44px 0 22px; font-size: 54.7px; line-height: 60px; font-weight: 400; color: #333; -webkit-text-stroke: .8px #333; }
.columns { display: grid; grid-template-columns: 1105px 1fr; }
.col { padding-left: 33px; }
.field-label { display: block; font-weight: 700; }
.field {
  display: block;
  width: 350px;
  height: 56px;
  margin-top: 1px;
  background: #fff;
  border: 2px solid #767676;
  border-radius: 4px;
}
.save {
  display: block;
  width: 110px;
  height: 57px;
  padding: 0;
  background: #efefef;
  border: 2px solid #767676;
  border-radius: 4px;
  font: 30px "Liberation Sans", Arial, sans-serif;
  color: #333;
}
.lists { margin: 0; padding: 0; list-style: none; }
.lists li { display: grid; grid-template-columns: 460px auto; line-height: 44px; }
a { color: #800080; }
.site-nav a { color: #fff; }
.category-note { margin: 45px 0 5px; }
.values { width: 1040px; table-layout: fixed; border-collapse: collapse; }
.c-id { width: 89px; }
.c-val { width: 136px; }
.c-desc { width: 390px; }
.c-rev { width: 139px; }
.c-pro { width: 169px; }
.c-rank { width: 117px; }
.values th { padding: 16px 18px 18px; text-align: left; border-bottom: 4px solid #ddd; white-space: nowrap; }
.values td { padding: 18px 18px 16px; height: 83.4px; vertical-align: top; border-bottom: 2px solid #ddd; white-space: nowrap; }
.values tbody tr:nth-child(odd) { background: #f9f9f9; }
.values tbody tr:last-child td { border-bottom: 0; }
.values td.val { font-size: 32.5px; font-weight: 700; line-height: 47px; }

.hscroll { height: 30px; padding: 6px 40px 0 6px; flex: none; background: #f8f8f8; border-top: 2px solid #e6e6e6; border-bottom: 3px solid #efefef; }
.hthumb { height: 16px; border-radius: 4px; background: #c0c0c0; }

/* dock */
.dock {
  position: absolute;
  z-index: 2;
  left: 264px;
  top: 1927px;
  width: 2832px;
  height: 162px;
  display: flex;
  align-items: flex-start;
  gap: 34px;
  padding: 20px 0 0 19px;
  border: 2px solid rgba(255, 255, 255, .16);
  border-radius: 44px;
  background: rgba(255, 255, 255, .09);
}
.app { position: relative; width: 108px; height: 108px; flex: none; }
.app > svg { display: block; width: 108px; height: 108px; }
.app > svg.tall { position: absolute; left: 0; top: -9px; height: 126px; width: 108px; overflow: visible; }
.dot::after {
  content: "";
  position: absolute;
  left: 51px;
  top: 129px;
  width: 6px;
  height: 8px;
  border-radius: 50%;
  background: #a897cf;
}
.badge {
  position: absolute;
  right: -17px;
  top: -12px;
  width: 50px;
  height: 50px;
  border-radius: 50%;
  background: #e0493c;
  color: #fff;
  font: 30px/50px Inter, "Liberation Sans", sans-serif;
  text-align: center;
}
.dock-sep { width: 2px; height: 120px; flex: none; background: rgba(255, 255, 255, .28); }
.dock-sep-a { margin: 0 11px 0 17px; }
.dock-sep-b { margin: 0 11px 0 13px; }
.cal-month { font: 700 22px Inter, "Liberation Sans", sans-serif; fill: #fff; text-anchor: middle; }
.cal-day { font: 300 66px Inter, "Liberation Sans", sans-serif; fill: #2a2a2a; text-anchor: middle; }
.zoom-word { font: 700 29px Inter, "Liberation Sans", sans-serif; fill: #fff; text-anchor: middle; }
.petals { opacity: .78; }
```
